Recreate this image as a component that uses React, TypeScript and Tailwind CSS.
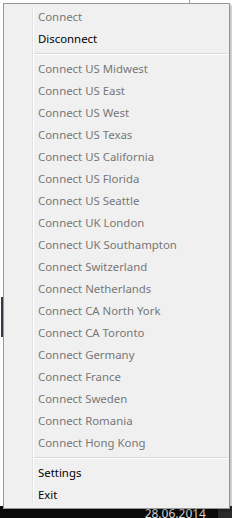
const servers = [
  'US Midwest',
  'US East',
  'US West',
  'US Texas',
  'US California',
  'US Florida',
  'US Seattle',
  'UK London',
  'UK Southampton',
  'Switzerland',
  'Netherlands',
  'CA North York',
  'CA Toronto',
  'Germany',
  'France',
  'Sweden',
  'Romania',
  'Hong Kong',
]

function Item({ label, disabled }: { label: string; disabled?: boolean }) {
  return (
    <div
      className={`h-[22px] flex items-center pl-[32px] text-[11.4px] leading-none ${
        disabled ? 'text-[#777777]' : 'text-black'
      }`}
    >
      {label}
    </div>
  )
}

function Separator() {
  return (
    <div className="h-[8px] flex flex-col justify-center pl-[28px]">
      <div className="border-t border-[#d9d9d9] border-b border-b-white" />
    </div>
  )
}

export default function App() {
  return (
    <div
      className="relative w-[232px] h-[518px] bg-white overflow-hidden"
      style={{ fontFamily: '"Noto Sans", "Open Sans", sans-serif' }}
    >
      {/* taskbar behind the menu */}
      <div className="absolute left-0 right-0 bottom-0 h-[12px] bg-[#0b0b0b] flex items-start justify-end">
        <span className="pt-[2px] pr-[12px] text-[12px] leading-none text-[#d8d8d8]">28.06.2014</span>
        <div className="w-[14px] h-full bg-[#2a2a2a]" />
      </div>
      <div className="absolute left-[1px] top-[297px] w-[2px] h-[40px] bg-[#333b44]" />
      <div className="absolute left-[189px] top-0 w-px h-[3px] bg-[#9a9a9a]" />

      {/* context menu */}
      <div className="absolute left-[3px] top-[3px] w-[227px] border border-[#979797] bg-[#f0f0f0] p-[2px] shadow-[2px_2px_2px_rgba(0,0,0,0.25)]">
        <div className="absolute left-[28px] top-[2px] bottom-[2px] w-[2px] border-l border-[#e2e2e2] border-r border-r-white" />
        <div className="relative">
          <Item label="Connect" disabled />
          <Item label="Disconnect" />
          <Separator />
          {servers.map((s) => (
            <Item key={s} label={`Connect ${s}`} disabled />
          ))}
          <Separator />
          <Item label="Settings" />
          <Item label="Exit" />
        </div>
      </div>
    </div>
  )
}
